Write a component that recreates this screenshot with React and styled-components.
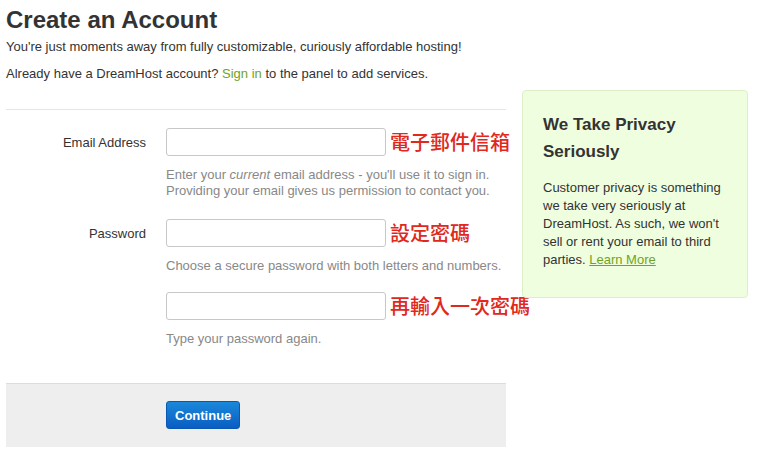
import React from 'react'
import styled, { createGlobalStyle } from 'styled-components'

const GlobalStyle = createGlobalStyle`
  body {
    margin: 0;
    background: #fff;
    font-family: "Liberation Sans", Arial, Helvetica, sans-serif;
    color: #333;
  }
`;

const Page = styled.div`
  display: flex;
  align-items: flex-start;
  padding: 0 0 0 6px;
`;

const Main = styled.div`
  width: 500px;
`;

const Title = styled.h1`
  margin: 6px 0 0;
  font-size: 24px;
  line-height: 28px;
  font-weight: 700;
  color: #333;
`;

const Lead = styled.p`
  margin: ${({ first }) => (first ? '4px 0 0' : '9px 0 0')};
  font-size: 13px;
  line-height: 18px;
`;

const Green = styled.a`
  color: #72a31c;
  text-decoration: ${({ underline }) => (underline ? 'underline' : 'none')};
  cursor: pointer;
`;

const Rule = styled.hr`
  margin: 26px 0 0;
  border: 0;
  border-top: 1px solid #e6e6e6;
`;

const Form = styled.div`
  padding-top: 18px;
`;

const Row = styled.div`
  display: grid;
  grid-template-columns: 140px 220px auto;
  column-gap: 20px;
  align-items: center;
  margin-bottom: ${({ space }) => space}px;
`;

const Label = styled.label`
  text-align: right;
  font-size: 13px;
  color: #333;
`;

const Input = styled.input`
  box-sizing: border-box;
  width: 220px;
  height: 28px;
  border: 1px solid #c8c8c8;
  border-radius: 3px;
  padding: 4px 6px;
  font-size: 13px;
  background: #fff;
  outline: none;
`;

const Note = styled.span`
  margin-left: -16px;
  font-family: "Noto Sans CJK TC", "Noto Sans CJK SC", sans-serif;
  font-size: 20px;
  font-weight: 500;
  line-height: 24px;
  color: #e0281c;
  white-space: nowrap;
`;

const Help = styled.div`
  grid-column: 2 / 4;
  margin-top: 11px;
  font-size: 13px;
  line-height: 16px;
  color: #888;
  white-space: nowrap;
`;

const Footer = styled.div`
  margin-top: 36px;
  height: 64px;
  box-sizing: border-box;
  background: #eee;
  border-top: 1px solid #ddd;
  padding: 17px 0 0 160px;
`;

const Button = styled.button`
  height: 28px;
  padding: 0 8px;
  border: 1px solid #0b58b0;
  border-radius: 3px;
  background: linear-gradient(#1a88d9, #0a5dc3);
  color: #fff;
  font-family: "Liberation Sans", Arial, sans-serif;
  font-size: 13px;
  font-weight: 700;
  cursor: pointer;
`;

const Sidebar = styled.aside`
  margin: 90px 0 0 16px;
  width: 226px;
  box-sizing: border-box;
  padding: 20px 20px 28px;
  background: #effedf;
  border: 1px solid #dcefc9;
  border-radius: 4px;
`;

const SideTitle = styled.h3`
  margin: 0;
  font-size: 17px;
  line-height: 27px;
  font-weight: 700;
  color: #333;
`;

const SideText = styled.p`
  margin: 14px 0 0;
  font-size: 13px;
  line-height: 18px;
  color: #333;
`;

const Field = ({ label, note, help, space = 0, type = 'text' }) => (
  <Row space={space}>
    <Label>{label}</Label>
    <Input type={type} />
    <Note>{note}</Note>
    <Help>{help}</Help>
  </Row>
);

const App = () => {
  return (
    <>
      <GlobalStyle />
      <Page>
        <Main>
          <Title>Create an Account</Title>
          <Lead first>You're just moments away from fully customizable, curiously affordable hosting!</Lead>
          <Lead>
            Already have a DreamHost account? <Green>Sign in</Green> to the panel to add services.
          </Lead>
          <Rule />
          <Form>
            <Field
              space={20}
              label="Email Address"
              note="電子郵件信箱"
              help={
                <>
                  Enter your <em>current</em> email address - you'll use it to sign in.
                  <br />
                  Providing your email gives us permission to contact you.
                </>
              }
            />
            <Field
              space={18}
              label="Password"
              type="password"
              note="設定密碼"
              help="Choose a secure password with both letters and numbers."
            />
            <Field
              label=""
              type="password"
              note="再輸入一次密碼"
              help="Type your password again."
            />
          </Form>
          <Footer>
            <Button>Continue</Button>
          </Footer>
        </Main>
        <Sidebar>
          <SideTitle>We Take Privacy Seriously</SideTitle>
          <SideText>
            Customer privacy is something we take very seriously at DreamHost. As such, we won't
            sell or rent your email to third parties. <Green underline>Learn More</Green>
          </SideText>
        </Sidebar>
      </Page>
    </>
  )
}

export default App;
